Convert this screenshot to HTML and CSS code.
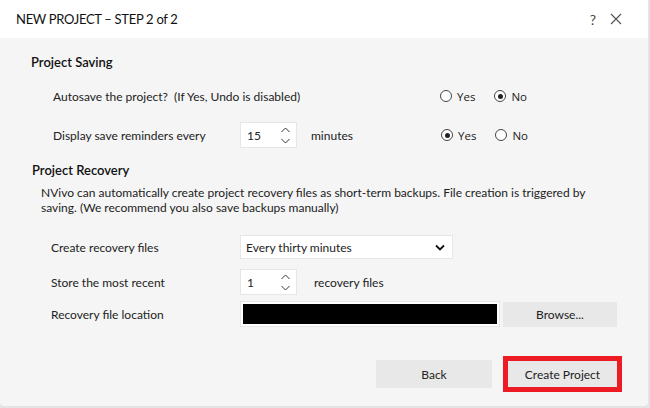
FILE: index.html
```html
<!DOCTYPE html>
<html>
<head>
<meta charset="utf-8">
<link rel="stylesheet" href="styles.css">
</head>
<body>
<div class="dialog">
  <div class="header">
    <div class="title">NEW PROJECT – STEP 2 of 2</div>
    <div class="hicons">
      <span class="help">?</span>
      <svg class="close" width="12" height="12" viewBox="0 0 12 12"><path d="M1 1L11 11M11 1L1 11" stroke="#555" stroke-width="1.2" fill="none"/></svg>
    </div>
  </div>
  <div class="body">
    <div class="sec-title">Project Saving</div>
    <div class="row autosave">
      <div class="lbl-wide">Autosave the project?&nbsp; (If Yes, Undo is disabled)</div>
      <div class="radios">
        <span class="radio"></span><span class="rlbl">Yes</span>
        <span class="radio on"></span><span class="rlbl">No</span>
      </div>
    </div>
    <div class="row display">
      <div class="lbl">Display save reminders every</div>
      <div class="spin"><span>15</span>
        <div class="arrows">
          <svg width="9" height="6" viewBox="0 0 9 6"><path d="M0.5 5L4.5 1L8.5 5" stroke="#333" fill="none"/></svg>
          <svg width="9" height="6" viewBox="0 0 9 6"><path d="M0.5 1L4.5 5L8.5 1" stroke="#333" fill="none"/></svg>
        </div>
      </div>
      <div class="unit">minutes</div>
      <div class="radios">
        <span class="radio on"></span><span class="rlbl">Yes</span>
        <span class="radio"></span><span class="rlbl">No</span>
      </div>
    </div>
    <div class="sec-title sec2">Project Recovery</div>
    <p class="para">NVivo can automatically create project recovery files as short-term backups. File creation is triggered by saving. (We recommend you also save backups manually)</p>
    <div class="row rec first">
      <div class="lbl2">Create recovery files</div>
      <div class="select"><span>Every thirty minutes</span>
        <svg width="10" height="7" viewBox="0 0 10 7"><path d="M1 1.5L5 5.5L9 1.5" stroke="#111" stroke-width="1.8" fill="none"/></svg>
      </div>
    </div>
    <div class="row rec store">
      <div class="lbl2">Store the most recent</div>
      <div class="spin"><span>1</span>
        <div class="arrows">
          <svg width="9" height="6" viewBox="0 0 9 6"><path d="M0.5 5L4.5 1L8.5 5" stroke="#333" fill="none"/></svg>
          <svg width="9" height="6" viewBox="0 0 9 6"><path d="M0.5 1L4.5 5L8.5 1" stroke="#333" fill="none"/></svg>
        </div>
      </div>
      <div class="unit2">recovery files</div>
    </div>
    <div class="row rec loc">
      <div class="lbl2">Recovery file location</div>
      <div class="path"><div class="black"></div></div>
      <button class="browse">Browse...</button>
    </div>
  </div>
  <div class="footer">
    <button class="btn">Back</button>
    <button class="btn primary">Create Project</button>
  </div>
</div>
</body>
</html>
```
FILE: styles.css
```css
html, body { margin: 0; padding: 0; }
body {
  width: 650px; height: 408px;
  background: #e3e3e3;
  font-family: Lato, "Open Sans", sans-serif;
  color: #222;
  overflow: hidden;
}
.dialog {
  width: 648px; height: 406px;
  background: #f5f5f5;
  border-bottom-right-radius: 4px;
  border-bottom-left-radius: 4px;
  display: flex; flex-direction: column;
}
.header {
  height: 38px; background: #fff;
  display: flex; align-items: center; justify-content: space-between;
  padding: 0 26px 0 16px;
}
.title { font-size: 13px; color: #111; letter-spacing: -0.3px; }
.hicons { display: flex; align-items: center; gap: 14px; }
.help { font-size: 14px; color: #444; }
.close { display: block; }
.body { padding: 14px 0 0 31px; flex: 1; font-size: 12px; }
.sec-title { height: 20px; line-height: 20px; font-size: 13px; font-weight: 600; color: #111; }
.sec2 { margin-top: 12px; margin-left: 1px; }
.row { display: flex; align-items: center; }
.autosave { margin-top: 14px; height: 20px; padding-left: 22px; }
.lbl-wide { width: 387px; }
.display { margin-top: 16px; height: 26px; padding-left: 22px; }
.lbl { width: 187px; }
.spin {
  width: 57px; height: 26px; box-sizing: border-box;
  background: #fff; border: 1px solid #e6e6e6;
  display: flex; align-items: center; justify-content: space-between;
  padding: 0 6px 0 6px;
}
.arrows { display: flex; flex-direction: column; gap: 5px; }
.arrows svg { display: block; }
.unit { margin-left: 14px; width: 130px; }
.radios { display: flex; align-items: center; font-family: "Open Sans", sans-serif; font-size: 11.5px; }
.radio {
  width: 12px; height: 12px; box-sizing: border-box; border-radius: 50%;
  border: 1px solid #444; background: #fff; position: relative;
}
.radio.on::after {
  content: ""; position: absolute; left: 2.5px; top: 2.5px;
  width: 5px; height: 5px; border-radius: 50%; background: #222;
}
.rlbl { margin-left: 5px; margin-right: 19px; }
.para { margin: 5px 0 0 10px; line-height: 15px; width: 570px; }
.rec { padding-left: 20px; }
.lbl2 { width: 189px; }
.first { margin-top: 20px; height: 24px; }
.select {
  width: 213px; height: 24px; box-sizing: border-box;
  background: #fff; border: 1px solid #e6e6e6;
  display: flex; align-items: center; justify-content: space-between;
  padding: 0 7px 0 5px;
}
.select svg { display: block; }
.store { margin-top: 10px; height: 26px; }
.unit2 { margin-left: 17px; }
.loc { margin-top: 6px; height: 26px; }
.path {
  width: 260px; height: 26px; box-sizing: border-box;
  background: #fff; border: 1px solid #e6e6e6; padding: 2px;
}
.black { background: #000; height: 100%; }
.browse {
  margin-left: 3px; width: 114px; height: 25px;
  background: #e8e8e8; border: none; font-family: inherit; font-size: 12px; color: #222;
}
.footer {
  display: flex; justify-content: flex-end; align-items: center;
  gap: 11px; padding: 0 26px 14px 0;
}
.btn {
  width: 116px; height: 28px; background: #e8e8e8; border: none;
  font-family: inherit; font-size: 12px; color: #222; border-radius: 2px;
}
.btn.primary { width: 119px; height: 36px; border: 5px solid #ed1c24; border-radius: 0; }
```
